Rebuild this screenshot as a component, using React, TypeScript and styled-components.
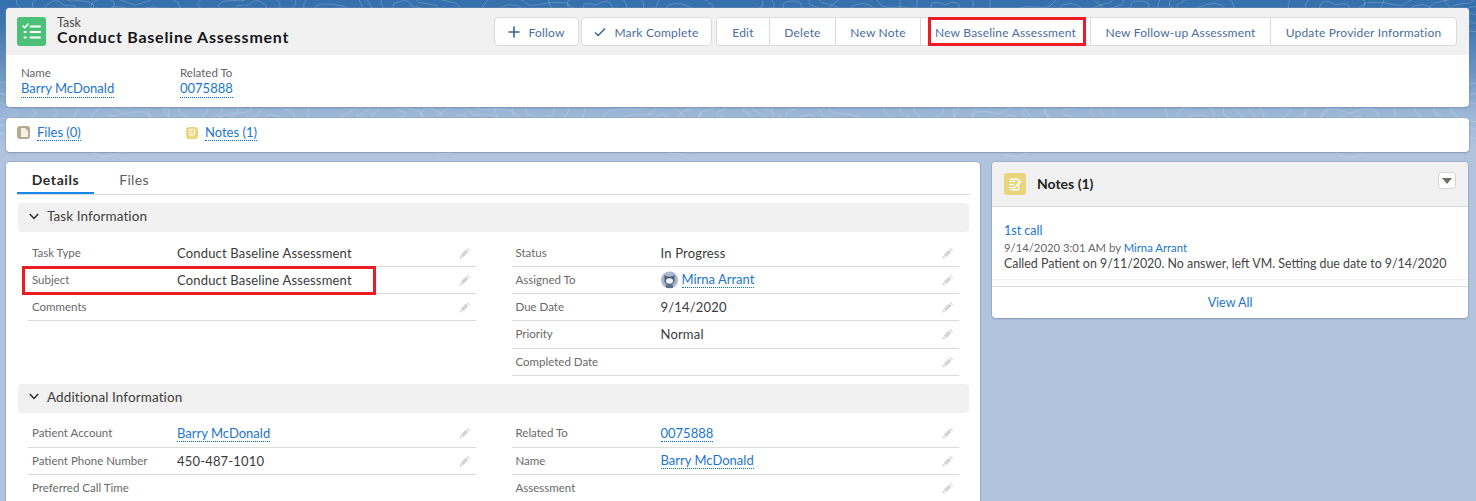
import React from 'react';
import styled, { createGlobalStyle } from 'styled-components';

const GlobalStyle = createGlobalStyle`
html, body {
    margin: 0;
    padding: 0;
    height: 501px;
    overflow: hidden;
    background: #b0c4df;
    font-family: Lato, "Open Sans", "Liberation Sans", sans-serif;
    font-size: 13px;
    color: #3e3e3c;
}
`;

const Page = styled.div`
position: relative;
height: 501px;
overflow: hidden;
padding: 8px 7px 0 6px;
box-sizing: border-box;
background: linear-gradient(180deg, #3470ac 0, #3b75b0 22px, #6a93c2 70px, #9ab5d7 112px, #b0c4df 150px);
`;

const Contours = styled.svg`
position: absolute;
left: 0;
top: 0;
width: 1476px;
height: 160px;
`;

const Card = styled.div`
position: relative;
background: #fff;
border-radius: 4px;
box-shadow: 0 0 0 1px rgba(130, 150, 175, 0.35), 0 1px 2px rgba(60, 80, 110, 0.3);
`;

const HighlightsHeader = styled.div`
display: flex;
align-items: center;
justify-content: space-between;
height: 47px;
padding: 0 12px 0 11px;
background: #f1f1f1;
border-radius: 4px 4px 0 0;
`;

const TitleBlock = styled.div`
display: flex;
align-items: center;
gap: 11px;
`;

const TitleText = styled.div`
margin-bottom: 2px;
`;

const IconTile = styled.div<{ $size: number; $color: string }>`
display: flex;
align-items: center;
justify-content: center;
flex: none;
width: ${p => p.$size}px;
height: ${p => p.$size}px;
background: ${p => p.$color};
border-radius: 3px;
`;

const ObjectName = styled.div`
font-size: 12.5px;
line-height: 13px;
color: #4a4a4a;
`;

const RecordTitle = styled.div`
font-size: 16px;
line-height: 16px;
font-weight: 700;
color: #16161a;
letter-spacing: 0.75px;
`;

const Actions = styled.div`
display: flex;
gap: 2px;
`;

const ButtonGroup = styled.div<{ $gap?: number }>`
display: flex;
margin-left: ${p => p.$gap || 0}px;
height: 29px;
background: #fff;
border: 1px solid #dddbda;
border-radius: 4px;
box-sizing: border-box;
`;

const ActionButton = styled.div<{ $width: number }>`
position: relative;
display: flex;
align-items: center;
justify-content: center;
gap: 8px;
width: ${p => p.$width}px;
padding-top: 1px;
box-sizing: border-box;
color: #4c6d9f;
font-size: 12px;
letter-spacing: 0.2px;
white-space: nowrap;
& + & {
    border-left: 1px solid #dddbda;
}
`;

const RedBox = styled.div<{ $left: number; $top: number; $width: number; $height: number }>`
position: absolute;
left: ${p => p.$left}px;
top: ${p => p.$top}px;
width: ${p => p.$width}px;
height: ${p => p.$height}px;
box-sizing: border-box;
border: 3px solid #ed1c24;
pointer-events: none;
`;

const HighlightFields = styled.div`
display: flex;
height: 52px;
padding: 11px 0 0 15px;
box-sizing: border-box;
`;

const HighlightField = styled.div<{ $width: number }>`
width: ${p => p.$width}px;
`;

const SmallLabel = styled.div`
font-size: 11.5px;
line-height: 14px;
color: #666;
`;

const DottedLink = styled.a`
display: inline-block;
color: #1b75d0;
line-height: 16px;
border-bottom: 1px dotted #0070d2;
`;

const HighlightLink = styled(DottedLink)`
padding-bottom: 1px;
`;

const RelatedBar = styled(Card)`
display: flex;
align-items: center;
height: 34px;
margin-top: 11px;
padding: 0 0 5px 11px;
box-sizing: border-box;
`;

const RelatedLink = styled.div<{ $width: number }>`
display: flex;
align-items: center;
gap: 7px;
width: ${p => p.$width}px;
font-size: 13px;
`;

const Columns = styled.div`
display: flex;
align-items: flex-start;
gap: 12px;
margin-top: 10px;
`;

const DetailCard = styled(Card)`
width: 974px;
height: 400px;
padding: 0 10px 0 11px;
box-sizing: border-box;
flex: none;
`;

const Tabs = styled.div`
display: flex;
height: 32px;
border-bottom: 1px solid #dddbda;
`;

const Tab = styled.div<{ $active?: boolean }>`
display: flex;
align-items: center;
justify-content: center;
width: ${p => (p.$active ? 77 : 80)}px;
height: 32px;
padding-top: ${p => (p.$active ? 4 : 2)}px;
box-sizing: border-box;
font-size: 14px;
letter-spacing: ${p => (p.$active ? 0.6 : 0.3)}px;
font-weight: ${p => (p.$active ? 700 : 400)};
color: ${p => (p.$active ? '#2b2b2b' : '#5c5c5c')};
border-bottom: ${p => (p.$active ? '2px solid #1589ee' : 'none')};
`;

const SectionHeader = styled.div<{ $top: number }>`
display: flex;
align-items: center;
gap: 8px;
height: 29px;
margin: ${p => p.$top}px 1px 0;
padding: 0 0 3px 11px;
box-sizing: border-box;
background: #f1f1f1;
border-radius: 4px;
font-size: 13.5px;
letter-spacing: 0.1px;
color: #3e3e3c;
`;

const SectionBody = styled.div`
display: grid;
grid-template-columns: 1fr 1fr;
column-gap: 36px;
align-items: start;
padding: 7.5px 11px 0;
`;

const FieldColumn = styled.div``;

const Row = styled.div`
position: relative;
display: flex;
align-items: center;
height: 27.25px;
padding: 0 5px 0 4px;
box-sizing: border-box;
border-bottom: 1px solid #dddbda;
`;

const Label = styled.div`
flex: none;
width: 145px;
margin-bottom: 1px;
font-size: 11.5px;
color: #696969;
`;

const Value = styled.div`
display: flex;
align-items: center;
gap: 4px;
flex: 1;
font-size: 13px;
letter-spacing: 0.18px;
color: #3a3a3a;
${DottedLink} {
    letter-spacing: 0;
}
`;

const SideCard = styled(Card)`
width: 476px;
flex: none;
`;

const SideHeader = styled.div`
display: flex;
align-items: center;
gap: 11px;
height: 45px;
padding: 0 12px 0 12px;
background: #f1f1f1;
border-bottom: 1px solid #dddbda;
border-radius: 4px 4px 0 0;
box-sizing: border-box;
`;

const SideTitle = styled.div`
flex: 1;
margin-bottom: 2px;
font-size: 14px;
font-weight: 700;
color: #222;
`;

const MenuButton = styled.div`
display: flex;
align-items: center;
justify-content: center;
width: 18px;
height: 17px;
margin-top: -7px;
background: #fff;
border: 1px solid #d5d5d5;
border-radius: 3px;
box-sizing: border-box;
`;

const NoteItem = styled.div`
height: 73px;
padding: 16px 12px 0;
box-sizing: border-box;
border-bottom: 1px solid #f3f3f3;
`;

const NoteTitle = styled.a`
display: block;
font-size: 12.5px;
line-height: 16px;
color: #1b75d0;
`;

const NoteMeta = styled.div`
font-size: 11.3px;
line-height: 17px;
color: #666;
a {
    color: #1b75d0;
}
`;

const NoteBody = styled.div`
font-size: 12.4px;
line-height: 16px;
white-space: nowrap;
color: #444;
`;

const ViewAll = styled.a`
display: flex;
align-items: center;
justify-content: center;
height: 32px;
margin-top: 6px;
box-sizing: border-box;
border-top: 1px solid #dddbda;
color: #1b75d0;
font-size: 12.5px;
`;

const contourPath = (cx: number, cy: number, r: number, seed: number) => {
    const pts: string[] = [];
    for (let i = 0; i < 28; i++) {
        const a = (i / 28) * Math.PI * 2;
        const w = 1 + 0.22 * Math.sin(a * 3 + seed) + 0.12 * Math.sin(a * 5 + seed * 2);
        pts.push(`${(cx + Math.cos(a) * r * w * 1.4).toFixed(1)},${(cy + Math.sin(a) * r * w * 0.8).toFixed(1)}`);
    }
    return `M${pts.join('L')}Z`;
};

const blobs: number[][] = [];
for (let i = 0; i < 34; i++) {
    blobs.push([i * 45 + (i % 3) * 14, (i % 2 ? 4 : 112) + (i % 4) * 6, 1 + i * 0.7]);
}

const Background = () => (
    <Contours viewBox="0 0 1476 160" fill="none" stroke="#fff" strokeOpacity="0.2" strokeWidth="1">
        {blobs.map(([x, y, seed], i) =>
            [10, 20, 32].map(r => <path key={`${i}-${r}`} d={contourPath(x, y, r, seed)} />)
        )}
    </Contours>
);

const TaskIcon = () => (
    <svg width="20" height="18" viewBox="0 0 20 18" fill="none" stroke="#fff" strokeLinecap="round">
        <path d="M1 3l1.7 1.7L6 1" strokeWidth="1.5" strokeLinejoin="round" />
        <path d="M8.5 3.5h9.5M8.5 9h9.5M8.5 14.5h9.5" strokeWidth="2" />
        <path d="M2.5 9h1.2M2.5 14.5h1.2" strokeWidth="2" />
    </svg>
);

const PlusIcon = () => (
    <svg width="12" height="12" viewBox="0 0 12 12" stroke="#36649c" strokeWidth="1.6">
        <path d="M6 .5v11M.5 6h11" />
    </svg>
);

const CheckIcon = () => (
    <svg width="12" height="10" viewBox="0 0 12 10" fill="none" stroke="#36649c" strokeWidth="1.4">
        <path d="M1 5.500l3.200 3L11 1.500" />
    </svg>
);

const FileIcon = () => (
    <svg width="8" height="9" viewBox="0 0 8 9" fill="#f3f0ea">
        <path d="M1 0h4l3 3v6H1z" />
    </svg>
);

const NoteIcon = ({ size }: { size: number }) => (
    <svg width={size} height={size} viewBox="0 0 14 14" fill="none" stroke="#fff" strokeLinecap="round">
        <path d="M2.500 2h6.500a1 1 0 011 1v8a1 1 0 01-1 1H2.500" strokeWidth="1.100" />
        <path d="M1.500 4h4.500M1.500 7h3.500M1.500 10h4.500" strokeWidth="1.200" />
        <path d="M7 9l5-5" strokeWidth="1.400" />
    </svg>
);

const Chevron = () => (
    <svg width="10" height="7" viewBox="0 0 10 7" fill="none" stroke="#2b2b2b" strokeWidth="1.500">
        <path d="M.8 1l4.200 4.400L9.200 1" />
    </svg>
);

const Caret = () => (
    <svg width="10" height="6" viewBox="0 0 10 6" fill="#706e6b">
        <path d="M0 0h10L5 6z" />
    </svg>
);

const Pencil = () => (
    <svg width="12" height="12" viewBox="0 0 12 12" fill="#d4d4d4">
        <path d="M8.600.9l2.500 2.500-.9.9-2.500-2.500zM6.900 2.600l2.500 2.500-5.200 5.200-2.500-2.500zM1.100 8.600l2.300 2.300-2.900.7z" />
    </svg>
);

const Avatar = () => (
    <svg width="17" height="18" viewBox="0 0 17 18">
        <circle cx="8.500" cy="9" r="8.500" fill="#a9b6cb" />
        <path d="M3.500 7.500V4l2.500 1.500h5L13.500 4v3.500c.7 3-1 6.500-5 6.500s-5.700-3.500-5-6.500z" fill="#4f5f7d" />
        <ellipse cx="8.500" cy="10" rx="3.600" ry="2.800" fill="#eef1f6" />
        <path d="M5 14h7v3H5z" fill="#5d6d8a" />
    </svg>
);

type Field = { label: string; value?: string; link?: boolean; avatar?: boolean; noPencil?: boolean; boxed?: boolean };

const taskLeft: Field[] = [
    { label: 'Task Type', value: 'Conduct Baseline Assessment' },
    { label: 'Subject', value: 'Conduct Baseline Assessment', boxed: true },
    { label: 'Comments' },
];
const taskRight: Field[] = [
    { label: 'Status', value: 'In Progress' },
    { label: 'Assigned To', value: 'Mirna Arrant', link: true, avatar: true },
    { label: 'Due Date', value: '9/14/2020' },
    { label: 'Priority', value: 'Normal' },
    { label: 'Completed Date' },
];
const extraLeft: Field[] = [
    { label: 'Patient Account', value: 'Barry McDonald', link: true },
    { label: 'Patient Phone Number', value: '450-487-1010' },
    { label: 'Preferred Call Time', noPencil: true },
];
const extraRight: Field[] = [
    { label: 'Related To', value: '0075888', link: true },
    { label: 'Name', value: 'Barry McDonald', link: true },
    { label: 'Assessment' },
];

const FieldRows = ({ fields }: { fields: Field[] }) => (
    <FieldColumn>
        {fields.map(f => (
            <Row key={f.label}>
                <Label>{f.label}</Label>
                <Value>
                    {f.avatar && <Avatar />}
                    {f.link ? <DottedLink>{f.value}</DottedLink> : f.value}
                </Value>
                {!f.noPencil && <Pencil />}
                {f.boxed && <RedBox $left={-6} $top={-1} $width={354} $height={29} />}
            </Row>
        ))}
    </FieldColumn>
);

const App = () => {
    return (
        <Page>
            <GlobalStyle />
            <Background />
            <Card>
                <HighlightsHeader>
                    <TitleBlock>
                        <IconTile $size={29} $color="#4bc076"><TaskIcon /></IconTile>
                        <TitleText>
                            <ObjectName>Task</ObjectName>
                            <RecordTitle>Conduct Baseline Assessment</RecordTitle>
                        </TitleText>
                    </TitleBlock>
                    <Actions>
                        <ButtonGroup>
                            <ActionButton $width={83}><PlusIcon />Follow</ActionButton>
                        </ButtonGroup>
                        <ButtonGroup>
                            <ActionButton $width={129}><CheckIcon />Mark Complete</ActionButton>
                        </ButtonGroup>
                        <ButtonGroup $gap={2}>
                            <ActionButton $width={52}>Edit</ActionButton>
                            <ActionButton $width={66}>Delete</ActionButton>
                            <ActionButton $width={85}>New Note</ActionButton>
                            <ActionButton $width={170}>
                                New Baseline Assessment
                                <RedBox $left={7} $top={-1} $width={158} $height={29} />
                            </ActionButton>
                            <ActionButton $width={180}>New Follow-up Assessment</ActionButton>
                            <ActionButton $width={186}>Update Provider Information</ActionButton>
                        </ButtonGroup>
                    </Actions>
                </HighlightsHeader>
                <HighlightFields>
                    <HighlightField $width={159}>
                        <SmallLabel>Name</SmallLabel>
                        <HighlightLink>Barry McDonald</HighlightLink>
                    </HighlightField>
                    <HighlightField $width={120}>
                        <SmallLabel>Related To</SmallLabel>
                        <HighlightLink>0075888</HighlightLink>
                    </HighlightField>
                </HighlightFields>
            </Card>

            <RelatedBar>
                <RelatedLink $width={169}>
                    <IconTile $size={13} $color="#b9a98f"><FileIcon /></IconTile>
                    <DottedLink>Files (0)</DottedLink>
                </RelatedLink>
                <RelatedLink $width={120}>
                    <IconTile $size={12} $color="#e8d67e"><NoteIcon size={9} /></IconTile>
                    <DottedLink>Notes (1)</DottedLink>
                </RelatedLink>
            </RelatedBar>

            <Columns>
                <DetailCard>
                    <Tabs>
                        <Tab $active>Details</Tab>
                        <Tab>Files</Tab>
                    </Tabs>
                    <SectionHeader $top={8}><Chevron />Task Information</SectionHeader>
                    <SectionBody>
                        <FieldRows fields={taskLeft} />
                        <FieldRows fields={taskRight} />
                    </SectionBody>
                    <SectionHeader $top={8}><Chevron />Additional Information</SectionHeader>
                    <SectionBody>
                        <FieldRows fields={extraLeft} />
                        <FieldRows fields={extraRight} />
                    </SectionBody>
                </DetailCard>
                <SideCard>
                    <SideHeader>
                        <IconTile $size={22} $color="#e8d67e"><NoteIcon size={15} /></IconTile>
                        <SideTitle>Notes (1)</SideTitle>
                        <MenuButton><Caret /></MenuButton>
                    </SideHeader>
                    <NoteItem>
                        <NoteTitle>1st call</NoteTitle>
                        <NoteMeta>9/14/2020 3:01 AM by <a>Mirna Arrant</a></NoteMeta>
                        <NoteBody>Called Patient on 9/11/2020. No answer, left VM. Setting due date to 9/14/2020</NoteBody>
                    </NoteItem>
                    <ViewAll>View All</ViewAll>
                </SideCard>
            </Columns>
        </Page>
    );
};

export default App;
